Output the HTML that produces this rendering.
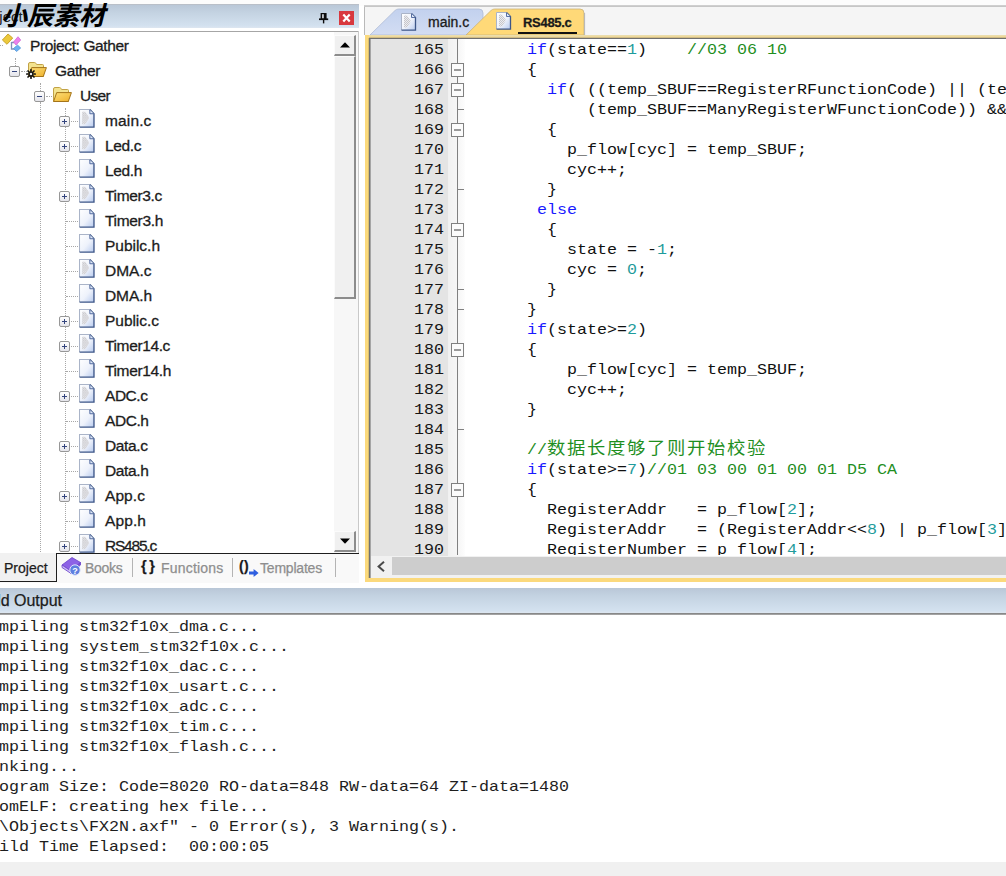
<!DOCTYPE html>
<html lang="zh">
<head>
<meta charset="utf-8">
<title>Gather - uVision</title>
<style>
html,body{margin:0;padding:0}
body{width:1006px;height:876px;position:relative;overflow:hidden;background:#fff;font-family:"Liberation Sans","Noto Sans CJK SC",sans-serif;color:#1a1a1a}
.abs{position:absolute}
svg{position:absolute;overflow:visible}
#topstrip{left:0;top:0;width:1006px;height:6px;background:#fcfcfc}
#tl1{left:0;top:4px;width:359px;height:1px;background:#b9bfc8}
#tl2{left:364px;top:5px;width:642px;height:1px;background:#cfcfcf}
#tl3{left:364px;top:6px;width:642px;height:1px;background:#c6c6c6}
#ptitle{left:0;top:5px;width:359px;height:23px;background:linear-gradient(#b9c7d7,#c3d2e1 30%,#d3e1ef 90%,#dde6f0)}
#ptitle-line{left:0;top:31px;width:358px;height:1px;background:#a6a6a6}
#pright{left:358px;top:31px;width:1px;height:523px;background:#c9c9c9}
#wm{left:1px;top:-1px;font-family:"Liberation Sans","Noto Sans CJK SC",sans-serif;font-weight:700;font-style:italic;font-size:26px;line-height:34px;color:#000;white-space:nowrap}
#ptxt{left:-24px;top:5px;height:23px;line-height:23px;font-size:15px;color:#222}
#tree{left:0;top:32px;width:334px;height:521px;background:#fff;overflow:hidden}
.row{-webkit-text-stroke:0.3px #1c1c1c;position:absolute;height:25px;line-height:24px;font-size:15.5px;white-space:nowrap;color:#1c1c1c}
.vd{position:absolute;width:0;border-left:1px dotted #a8a8a8}
.hd{position:absolute;height:0;border-top:1px dotted #a8a8a8}
.pm{position:absolute;width:9px;height:9px;border:1px solid #979797;border-radius:2px;background:linear-gradient(#fff,#e4e4ea)}
.pm i{position:absolute;left:2px;top:4px;width:5px;height:1px;background:#34457e}
.pm b{position:absolute;left:4px;top:2px;width:1px;height:5px;background:#34457e}
#vsb{left:334px;top:32px;width:24px;height:521px;background:#f7f7f7}
.sbtn{position:absolute;background:#f0f0f0;border-right:2px solid #8c8c8c;border-bottom:2px solid #8c8c8c;border-top:1px solid #fbfbfb;border-left:1px solid #fbfbfb;box-sizing:border-box}
#ptabs{left:0;top:553px;width:359px;height:30px;background:#f9f9f9}
#ptabs .t{-webkit-text-stroke:0.25px;position:absolute;top:5px;height:20px;line-height:20px;font-size:14px;color:#8e8e8e;white-space:nowrap}
#ptabs .sep{position:absolute;top:5px;width:1px;height:19px;background:#b4b4b4}
#edleft{left:364px;top:5px;width:1px;height:30px;background:#b9b9b9}
#tabbar{left:365px;top:7px;width:641px;height:28px;background:#f5f5f5}
#yframe{left:365px;top:35px;width:641px;height:547px;background:#fbd97c}
#ytop{left:369px;top:35px;width:637px;height:3px;background:linear-gradient(#e9dfb4,#efd898 60%,#b9a777)}
#edinner{left:369px;top:38px;width:637px;height:540px;background:#fff;border-left:1px solid #727272;border-top:1px solid #707070;box-sizing:border-box}
#yl{left:368px;top:38px;width:1px;height:540px;background:#d9bf6e}
#yl2{left:370px;top:39px;width:1px;height:539px;background:#a5a5a5}
#lnmargin{left:371px;top:39px;width:78px;height:517px;background:#e4e4e4}
#foldmargin{left:448px;top:39px;width:17px;height:517px;background:linear-gradient(90deg,#f1f1f1,#f6f6f6 60%,#fdfdfd)}
#foldline{left:457px;top:39px;width:1px;height:517px;background:#808080}
.fb{position:absolute;left:451px;width:11px;height:12px;border:1px solid #808080;background:#fbfbfb}
.fb i{position:absolute;left:2px;top:5px;width:7px;height:2px;background:#999}
.ft{position:absolute;left:458px;width:6px;height:1px;background:#808080}
.ln{position:absolute;left:369px;width:75px;text-align:right;height:20px;line-height:20px;font-family:"Liberation Mono",monospace;font-size:15px;transform:scaleX(1.111);transform-origin:100% 0;color:#161616}
.cl{position:absolute;left:467px;height:20px;line-height:20px;font-family:"Liberation Mono","Noto Sans CJK SC",monospace;font-size:15px;transform:scaleX(1.111);transform-origin:0 0;color:#101010;white-space:pre}
.k{color:#1a1aff}.n{color:#1f9c9c}.c{color:#1f8f1f}
.zh{font-family:"Noto Sans CJK SC",sans-serif;font-size:16.5px;letter-spacing:1.5px;line-height:0;position:relative;top:0px}
#hsb{left:370px;top:556px;width:636px;height:22px;background:#f1f1f1}
#hthumb{left:392px;top:557px;width:614px;height:18px;background:#cdcdcd}
.etab{-webkit-text-stroke:0.3px #1a1a1a;position:absolute;font-size:14px;white-space:nowrap;color:#1a1a1a}
#otitle{left:0;top:588px;width:1006px;height:25px;background:linear-gradient(#b9c7d7,#c3d2e1 30%,#d3e1ef 90%,#dde6f0)}
#otitle-line{left:0;top:613px;width:1006px;height:2px;background:linear-gradient(#7a7a7a,#b0b0b0)}
#otxt{-webkit-text-stroke:0.25px;left:-26px;top:588px;height:25px;line-height:26px;font-size:16px;color:#1c1c1c;white-space:nowrap}
#out{left:0;top:615px;width:1006px;height:247px;background:#fff}
.ol{position:absolute;height:20px;line-height:20px;font-family:"Liberation Mono",monospace;font-size:15px;transform:scaleX(1.111);transform-origin:0 0;color:#1e1e1e;white-space:pre}
#bottom{left:0;top:862px;width:1006px;height:14px;background:#f0f0f0}
</style>
</head>
<body>
<svg width="0" height="0" style="position:absolute"><defs>
<linearGradient id="gf" x1="0" y1="0" x2="1" y2="1"><stop offset="0" stop-color="#fde07a"/><stop offset="1" stop-color="#eeb02a"/></linearGradient>
<linearGradient id="gp" x1="0" y1="0" x2="1" y2="1"><stop offset="0" stop-color="#ffffff"/><stop offset="0.55" stop-color="#eef2fb"/><stop offset="1" stop-color="#b9cbee"/></linearGradient>
<pattern id="dith" width="2" height="2" patternUnits="userSpaceOnUse"><rect width="2" height="2" fill="#ececf0"/><rect width="1" height="1" fill="#c6c6ca"/><rect x="1" y="1" width="1" height="1" fill="#c6c6ca"/></pattern>
<g id="folder"><path d="M0.5 14.5V2Q0.5 0.5 2 0.5H6.5Q7.5 0.5 8 1.5L8.6 2.5H14.5Q15.5 2.5 15.5 3.5V14.5Z" fill="#f3e38f" stroke="#c2a246"/><path d="M0.6 14.5L3.7 5.6H18.4L15.3 14.5Z" fill="url(#gf)" stroke="#a4741a" stroke-linejoin="round"/></g>
<g id="page"><path d="M0.5 0.5H10.5L14.5 4.5V17H0.5Z" fill="url(#gp)" stroke="none"/><path d="M0.5 17V0.5H10.5" fill="none" stroke="#aab4c8"/><path d="M10.5 0.5L14.5 4.5V17.2H0.5" fill="none" stroke="#3d5688" stroke-width="1.3"/><path d="M10.5 0.8V4.5H14.3" fill="#dfe8f8" stroke="#4a639a" stroke-width="0.9"/></g>
<g id="cpage"><use href="#page"/><path d="M3 2.5H6L9.5 7.5V9L6 14.5H3Z" fill="url(#dith)"/></g>
</defs></svg>
<div class="abs" id="topstrip"></div><div class="abs" id="tl1"></div>
<div class="abs" id="ptitle"></div>
<div class="abs" id="ptxt">Project</div>
<div class="abs" id="ptitle-line"></div>
<div class="abs" id="pright"></div>
<svg style="left:319px;top:13px" width="10" height="11" viewBox="0 0 10 11"><path d="M1.6 0H7.6V6H1.6Z" fill="#0c0c0c"/><rect x="3.2" y="1.2" width="1.5" height="4.4" fill="#eef2f8"/><rect x="0" y="5.4" width="9.2" height="1.7" fill="#0c0c0c"/><rect x="3.9" y="7" width="1.4" height="3.4" fill="#0c0c0c"/></svg>
<div class="abs" style="left:339px;top:11px;width:15px;height:14px;background:#d8393f"></div>
<svg style="left:339px;top:11px" width="15" height="14" viewBox="0 0 15 14"><path d="M4.3 3.6L10.7 10.4M10.7 3.6L4.3 10.4" stroke="#fff" stroke-width="2.2"/></svg>
<div class="abs" id="tree">
<div class="hd" style="left:0;top:13px;width:3px"></div>
<div class="vd" style="left:15px;top:26px;height:8px"></div>
<div class="hd" style="left:21px;top:39px;width:6px"></div>
<div class="vd" style="left:40px;top:51px;height:8px"></div>
<div class="vd" style="left:40px;top:70px;height:460px"></div>
<div class="hd" style="left:46px;top:64px;width:6px"></div>
<div class="vd" style="left:65px;top:76px;height:460px"></div>
<div class="row" style="left:30px;top:2px;letter-spacing:-0.38px">Project: Gather</div>
<svg style="left:2px;top:1px" width="21" height="20" viewBox="0 0 21 20"><path d="M9.5 9V16H12.5M9.5 9.5H12" fill="none" stroke="#7f90b8" stroke-width="1.3"/><path d="M0.4 7L6 1L10.7 5L5 11.3Z" fill="#ecc93c" stroke="#c59f22" stroke-width="0.9"/><path d="M11.5 9L16 3.7L18.7 7L14 12Z" fill="#ec82ec" stroke="#cc5fce" stroke-width="0.7"/><path d="M11.5 15.5L15.5 12L18.7 15L14.5 18.5Z" fill="#6db1f1" stroke="#4a8fd6" stroke-width="0.7"/></svg>
<div class="row" style="left:55px;top:27px;letter-spacing:-0.40px">Gather</div>
<div class="pm" style="left:9px;top:34px"><i></i></div>
<svg style="left:28px;top:30px" width="19" height="15" viewBox="0 0 19 15"><use href="#folder"/></svg>
<svg style="left:26px;top:37px" width="10" height="10" viewBox="0 0 10 10"><g stroke="#111" stroke-width="1.7" stroke-linecap="round"><path d="M5 0.8V9.2M0.8 5H9.2M2 2L8 8M8 2L2 8"/></g><circle cx="5" cy="5" r="1.2" fill="#eee"/></svg>
<div class="row" style="left:80px;top:52px;letter-spacing:-0.68px">User</div>
<div class="pm" style="left:34px;top:59px"><i></i></div>
<svg style="left:53px;top:55px" width="19" height="15" viewBox="0 0 19 15"><use href="#folder"/></svg>
<div class="row" style="left:105px;top:77px;letter-spacing:0.14px">main.c</div>
<div class="pm" style="left:59px;top:84px"><i></i><b></b></div>
<div class="hd" style="left:71px;top:89px;width:7px"></div>
<svg style="left:79px;top:77px" width="15.5" height="19" viewBox="0 0 15 18" preserveAspectRatio="none"><use href="#cpage"/></svg>
<div class="row" style="left:105px;top:102px;letter-spacing:-0.38px">Led.c</div>
<div class="pm" style="left:59px;top:109px"><i></i><b></b></div>
<div class="hd" style="left:71px;top:114px;width:7px"></div>
<svg style="left:79px;top:102px" width="15.5" height="19" viewBox="0 0 15 18" preserveAspectRatio="none"><use href="#cpage"/></svg>
<div class="row" style="left:105px;top:127px;letter-spacing:-0.36px">Led.h</div>
<div class="hd" style="left:66px;top:139px;width:12px"></div>
<svg style="left:79px;top:127px" width="15.5" height="19" viewBox="0 0 15 18" preserveAspectRatio="none"><use href="#page"/></svg>
<div class="row" style="left:105px;top:152px;letter-spacing:-0.34px">Timer3.c</div>
<div class="pm" style="left:59px;top:159px"><i></i><b></b></div>
<div class="hd" style="left:71px;top:164px;width:7px"></div>
<svg style="left:79px;top:152px" width="15.5" height="19" viewBox="0 0 15 18" preserveAspectRatio="none"><use href="#cpage"/></svg>
<div class="row" style="left:105px;top:177px;letter-spacing:-0.32px">Timer3.h</div>
<div class="hd" style="left:66px;top:189px;width:12px"></div>
<svg style="left:79px;top:177px" width="15.5" height="19" viewBox="0 0 15 18" preserveAspectRatio="none"><use href="#page"/></svg>
<div class="row" style="left:105px;top:202px;letter-spacing:-0.02px">Pubilc.h</div>
<div class="hd" style="left:66px;top:214px;width:12px"></div>
<svg style="left:79px;top:202px" width="15.5" height="19" viewBox="0 0 15 18" preserveAspectRatio="none"><use href="#page"/></svg>
<div class="row" style="left:105px;top:227px;letter-spacing:0.00px">DMA.c</div>
<div class="hd" style="left:66px;top:239px;width:12px"></div>
<svg style="left:79px;top:227px" width="15.5" height="19" viewBox="0 0 15 18" preserveAspectRatio="none"><use href="#cpage"/></svg>
<div class="row" style="left:105px;top:252px;letter-spacing:-0.08px">DMA.h</div>
<div class="hd" style="left:66px;top:264px;width:12px"></div>
<svg style="left:79px;top:252px" width="15.5" height="19" viewBox="0 0 15 18" preserveAspectRatio="none"><use href="#page"/></svg>
<div class="row" style="left:105px;top:277px;letter-spacing:-0.04px">Public.c</div>
<div class="pm" style="left:59px;top:284px"><i></i><b></b></div>
<div class="hd" style="left:71px;top:289px;width:7px"></div>
<svg style="left:79px;top:277px" width="15.5" height="19" viewBox="0 0 15 18" preserveAspectRatio="none"><use href="#cpage"/></svg>
<div class="row" style="left:105px;top:302px;letter-spacing:-0.37px">Timer14.c</div>
<div class="pm" style="left:59px;top:309px"><i></i><b></b></div>
<div class="hd" style="left:71px;top:314px;width:7px"></div>
<svg style="left:79px;top:302px" width="15.5" height="19" viewBox="0 0 15 18" preserveAspectRatio="none"><use href="#cpage"/></svg>
<div class="row" style="left:105px;top:327px;letter-spacing:-0.36px">Timer14.h</div>
<div class="hd" style="left:66px;top:339px;width:12px"></div>
<svg style="left:79px;top:327px" width="15.5" height="19" viewBox="0 0 15 18" preserveAspectRatio="none"><use href="#page"/></svg>
<div class="row" style="left:105px;top:352px;letter-spacing:-0.46px">ADC.c</div>
<div class="pm" style="left:59px;top:359px"><i></i><b></b></div>
<div class="hd" style="left:71px;top:364px;width:7px"></div>
<svg style="left:79px;top:352px" width="15.5" height="19" viewBox="0 0 15 18" preserveAspectRatio="none"><use href="#cpage"/></svg>
<div class="row" style="left:105px;top:377px;letter-spacing:-0.43px">ADC.h</div>
<div class="hd" style="left:66px;top:389px;width:12px"></div>
<svg style="left:79px;top:377px" width="15.5" height="19" viewBox="0 0 15 18" preserveAspectRatio="none"><use href="#page"/></svg>
<div class="row" style="left:105px;top:402px;letter-spacing:-0.38px">Data.c</div>
<div class="pm" style="left:59px;top:409px"><i></i><b></b></div>
<div class="hd" style="left:71px;top:414px;width:7px"></div>
<svg style="left:79px;top:402px" width="15.5" height="19" viewBox="0 0 15 18" preserveAspectRatio="none"><use href="#cpage"/></svg>
<div class="row" style="left:105px;top:427px;letter-spacing:-0.36px">Data.h</div>
<div class="hd" style="left:66px;top:439px;width:12px"></div>
<svg style="left:79px;top:427px" width="15.5" height="19" viewBox="0 0 15 18" preserveAspectRatio="none"><use href="#page"/></svg>
<div class="row" style="left:105px;top:452px;letter-spacing:0.07px">App.c</div>
<div class="pm" style="left:59px;top:459px"><i></i><b></b></div>
<div class="hd" style="left:71px;top:464px;width:7px"></div>
<svg style="left:79px;top:452px" width="15.5" height="19" viewBox="0 0 15 18" preserveAspectRatio="none"><use href="#cpage"/></svg>
<div class="row" style="left:105px;top:477px;letter-spacing:0.10px">App.h</div>
<div class="hd" style="left:66px;top:489px;width:12px"></div>
<svg style="left:79px;top:477px" width="15.5" height="19" viewBox="0 0 15 18" preserveAspectRatio="none"><use href="#page"/></svg>
<div class="row" style="left:105px;top:502px;letter-spacing:-1.21px">RS485.c</div>
<div class="pm" style="left:59px;top:509px"><i></i><b></b></div>
<div class="hd" style="left:71px;top:514px;width:7px"></div>
<svg style="left:79px;top:502px" width="15.5" height="19" viewBox="0 0 15 18" preserveAspectRatio="none"><use href="#cpage"/></svg>
</div>
<div class="abs" id="vsb">
<div class="sbtn" style="left:0;top:3px;width:22px;height:21px"></div>
<svg style="left:6px;top:10px" width="10" height="6" viewBox="0 0 10 6"><path d="M0 5.5L5 0.3L10 5.5Z" fill="#000"/></svg>
<div class="sbtn" style="left:0;top:24px;width:22px;height:243px"></div>
<div class="sbtn" style="left:0;top:499px;width:22px;height:21px"></div>
<svg style="left:6px;top:506px" width="10" height="6" viewBox="0 0 10 6"><path d="M0 0.5L5 5.7L10 0.5Z" fill="#000"/></svg>
</div>
<div class="abs" id="ptabs">
<div class="abs" style="left:0;top:0;width:56px;height:28px;background:#f1f1f1;border-right:1px solid #1e1e1e;border-bottom:1px solid #1e1e1e"></div>
<div class="abs" style="left:56px;top:0;width:303px;height:1px;background:#1e1e1e"></div>
<div class="t" style="left:4px;color:#1c1c1c">Project</div>
<svg style="left:61px;top:3px" width="22" height="21" viewBox="0 0 22 21"><path d="M1 9L11 1.5L19.5 6.5L10 15Z" fill="#8d62e6" stroke="#6a41c9" stroke-width="0.8"/><path d="M1 9L10 15V17.5L1 11.5Z" fill="#c9b8f6" stroke="#6a41c9" stroke-width="0.8"/><path d="M10 15L19.5 6.5V9L10 17.5Z" fill="#7a50d8" stroke="#6a41c9" stroke-width="0.8"/><circle cx="14" cy="14" r="5.2" fill="#5e7fe0" stroke="#dfe6fb" stroke-width="1"/><text x="14" y="17.6" font-family="Liberation Sans,sans-serif" font-weight="bold" font-size="9" fill="#fff" text-anchor="middle">?</text></svg>
<div class="t" style="left:85px;letter-spacing:-0.3px">Books</div>
<div class="sep" style="left:132px"></div>
<div class="t" style="left:141px;color:#1a1a1a;font-weight:bold;font-size:14.5px;letter-spacing:2.5px;top:3px">{}</div>
<div class="t" style="left:161px;letter-spacing:0.2px">Functions</div>
<div class="sep" style="left:232px"></div>
<div class="t" style="left:239px;color:#1a1a1a;font-weight:bold;font-size:14px;letter-spacing:0.3px;top:3px">()</div>
<svg style="left:249px;top:16px" width="10" height="8" viewBox="0 0 10 8"><path d="M0 2.6H4.6V0L9.6 4L4.6 8V5.4H0Z" fill="#2f5fe0"/></svg>
<div class="t" style="left:260px;letter-spacing:-0.2px">Templates</div>
<div class="sep" style="left:335px"></div>
</div>
<div class="abs" id="edleft"></div>
<div class="abs" id="tabbar"></div><div class="abs" id="tl2"></div><div class="abs" id="tl3"></div>
<svg style="left:365px;top:5px" width="260" height="30" viewBox="0 0 260 30"><defs><linearGradient id="gt1" x1="0" y1="0" x2="0" y2="1"><stop offset="0" stop-color="#c2d1ee"/><stop offset="1" stop-color="#d3ddf3"/></linearGradient></defs><path d="M5 30L30 5.5Q31.5 4 33.5 4H114Q118 4 118 8V30Z" fill="url(#gt1)" stroke="#aebbd6" stroke-width="0.8"/><path d="M101 30L126 5.5Q127.5 4 129.5 4H215Q219 4 219 8V30Z" fill="#ffd978" stroke="#c9b37a" stroke-width="0.8"/><path d="M219.6 8V30" stroke="#b5b5b5" stroke-width="1"/></svg>
<svg style="left:401px;top:13px" width="15" height="18" viewBox="0 0 15 18"><use href="#cpage"/></svg>
<svg style="left:496px;top:12px" width="15" height="18" viewBox="0 0 15 18"><use href="#cpage"/></svg>
<div class="etab" style="left:428px;top:12px;line-height:20px">main.c</div>
<div class="etab" style="left:523px;top:13px;line-height:20px;font-weight:bold;font-size:13px;letter-spacing:-0.3px">RS485.c</div>
<div class="abs" style="left:518px;top:32px;width:59px;height:2px;background:#111"></div>
<div class="abs" id="yframe"></div>
<div class="abs" id="ytop"></div><div class="abs" id="edinner"></div><div class="abs" id="yl"></div>
<div class="abs" id="yl2" style="z-index:3"></div>
<div class="abs" id="lnmargin"></div>
<div class="abs" id="foldmargin"></div>
<div class="abs" id="code" style="left:0;top:0;width:1006px;height:555px;overflow:hidden">
<div class="abs" id="foldline"></div>
<div class="ln" style="top:41px">165</div>
<div class="cl" style="top:41px">      <span class="k">if</span>(state==<span class="n">1</span>)    <span class="c">//03 06 10</span></div>
<div class="ln" style="top:61px">166</div>
<div class="cl" style="top:61px">      {</div>
<div class="fb" style="top:63px"><i></i></div>
<div class="ln" style="top:81px">167</div>
<div class="cl" style="top:81px">        <span class="k">if</span>( ((temp_SBUF==RegisterRFunctionCode) || (temp_SBUF==OneRegisterWFunctionCode) ||</div>
<div class="fb" style="top:83px"><i></i></div>
<div class="ln" style="top:101px">168</div>
<div class="cl" style="top:101px">            (temp_SBUF==ManyRegisterWFunctionCode)) &amp;&amp; (cyc==<span class="n">1</span>) )</div>
<div class="ft" style="top:109px"></div>
<div class="ln" style="top:121px">169</div>
<div class="cl" style="top:121px">        {</div>
<div class="fb" style="top:123px"><i></i></div>
<div class="ln" style="top:141px">170</div>
<div class="cl" style="top:141px">          p_flow[cyc] = temp_SBUF;</div>
<div class="ln" style="top:161px">171</div>
<div class="cl" style="top:161px">          cyc++;</div>
<div class="ln" style="top:181px">172</div>
<div class="cl" style="top:181px">        }</div>
<div class="ft" style="top:189px"></div>
<div class="ln" style="top:201px">173</div>
<div class="cl" style="top:201px">       <span class="k">else</span></div>
<div class="ln" style="top:221px">174</div>
<div class="cl" style="top:221px">        {</div>
<div class="fb" style="top:223px"><i></i></div>
<div class="ln" style="top:241px">175</div>
<div class="cl" style="top:241px">          state = -<span class="n">1</span>;</div>
<div class="ln" style="top:261px">176</div>
<div class="cl" style="top:261px">          cyc = <span class="n">0</span>;</div>
<div class="ln" style="top:281px">177</div>
<div class="cl" style="top:281px">        }</div>
<div class="ft" style="top:289px"></div>
<div class="ln" style="top:301px">178</div>
<div class="cl" style="top:301px">      }</div>
<div class="ft" style="top:309px"></div>
<div class="ln" style="top:321px">179</div>
<div class="cl" style="top:321px">      <span class="k">if</span>(state&gt;=<span class="n">2</span>)</div>
<div class="ln" style="top:341px">180</div>
<div class="cl" style="top:341px">      {</div>
<div class="fb" style="top:343px"><i></i></div>
<div class="ln" style="top:361px">181</div>
<div class="cl" style="top:361px">          p_flow[cyc] = temp_SBUF;</div>
<div class="ln" style="top:381px">182</div>
<div class="cl" style="top:381px">          cyc++;</div>
<div class="ln" style="top:401px">183</div>
<div class="cl" style="top:401px">      }</div>
<div class="ln" style="top:421px">184</div>
<div class="cl" style="top:421px"></div>
<div class="ft" style="top:429px"></div>
<div class="ln" style="top:441px">185</div>
<div class="cl" style="top:441px">      <span class="c">//<span class="zh">数据长度够了则开始校验</span></span></div>
<div class="ln" style="top:461px">186</div>
<div class="cl" style="top:461px">      <span class="k">if</span>(state&gt;=<span class="n">7</span>)<span class="c">//01 03 00 01 00 01 D5 CA</span></div>
<div class="ln" style="top:481px">187</div>
<div class="cl" style="top:481px">      {</div>
<div class="fb" style="top:483px"><i></i></div>
<div class="ln" style="top:501px">188</div>
<div class="cl" style="top:501px">        RegisterAddr   = p_flow[<span class="n">2</span>];</div>
<div class="ln" style="top:521px">189</div>
<div class="cl" style="top:521px">        RegisterAddr   = (RegisterAddr&lt;&lt;<span class="n">8</span>) | p_flow[<span class="n">3</span>];</div>
<div class="ln" style="top:541px">190</div>
<div class="cl" style="top:541px">        RegisterNumber = p_flow[<span class="n">4</span>];</div>
</div>
<div class="abs" id="hsb"></div>
<div class="abs" id="hthumb"></div>
<svg style="left:377px;top:561px" width="8" height="11" viewBox="0 0 8 11"><path d="M7 0.8L1.6 5.5L7 10.2" fill="none" stroke="#4a4a4a" stroke-width="2"/></svg>
<div class="abs" id="otitle"></div>
<div class="abs" id="otitle-line"></div>
<div class="abs" id="otxt">Build Output</div>
<div class="abs" id="out"></div>
<div class="ol" style="left:-21px;top:618px">compiling stm32f10x_dma.c...</div>
<div class="ol" style="left:-21px;top:638px">compiling system_stm32f10x.c...</div>
<div class="ol" style="left:-21px;top:658px">compiling stm32f10x_dac.c...</div>
<div class="ol" style="left:-21px;top:678px">compiling stm32f10x_usart.c...</div>
<div class="ol" style="left:-21px;top:698px">compiling stm32f10x_adc.c...</div>
<div class="ol" style="left:-21px;top:718px">compiling stm32f10x_tim.c...</div>
<div class="ol" style="left:-21px;top:738px">compiling stm32f10x_flash.c...</div>
<div class="ol" style="left:-21px;top:758px">linking...</div>
<div class="ol" style="left:-21px;top:778px">Program Size: Code=8020 RO-data=848 RW-data=64 ZI-data=1480</div>
<div class="ol" style="left:-21px;top:798px">FromELF: creating hex file...</div>
<div class="ol" style="left:-21px;top:818px">&quot;.\Objects\FX2N.axf&quot; - 0 Error(s), 3 Warning(s).</div>
<div class="ol" style="left:-21px;top:838px">Build Time Elapsed:  00:00:05</div>
<div class="abs" id="bottom"></div>
<div class="abs" id="wm">小辰素材</div>
</body>
</html>
